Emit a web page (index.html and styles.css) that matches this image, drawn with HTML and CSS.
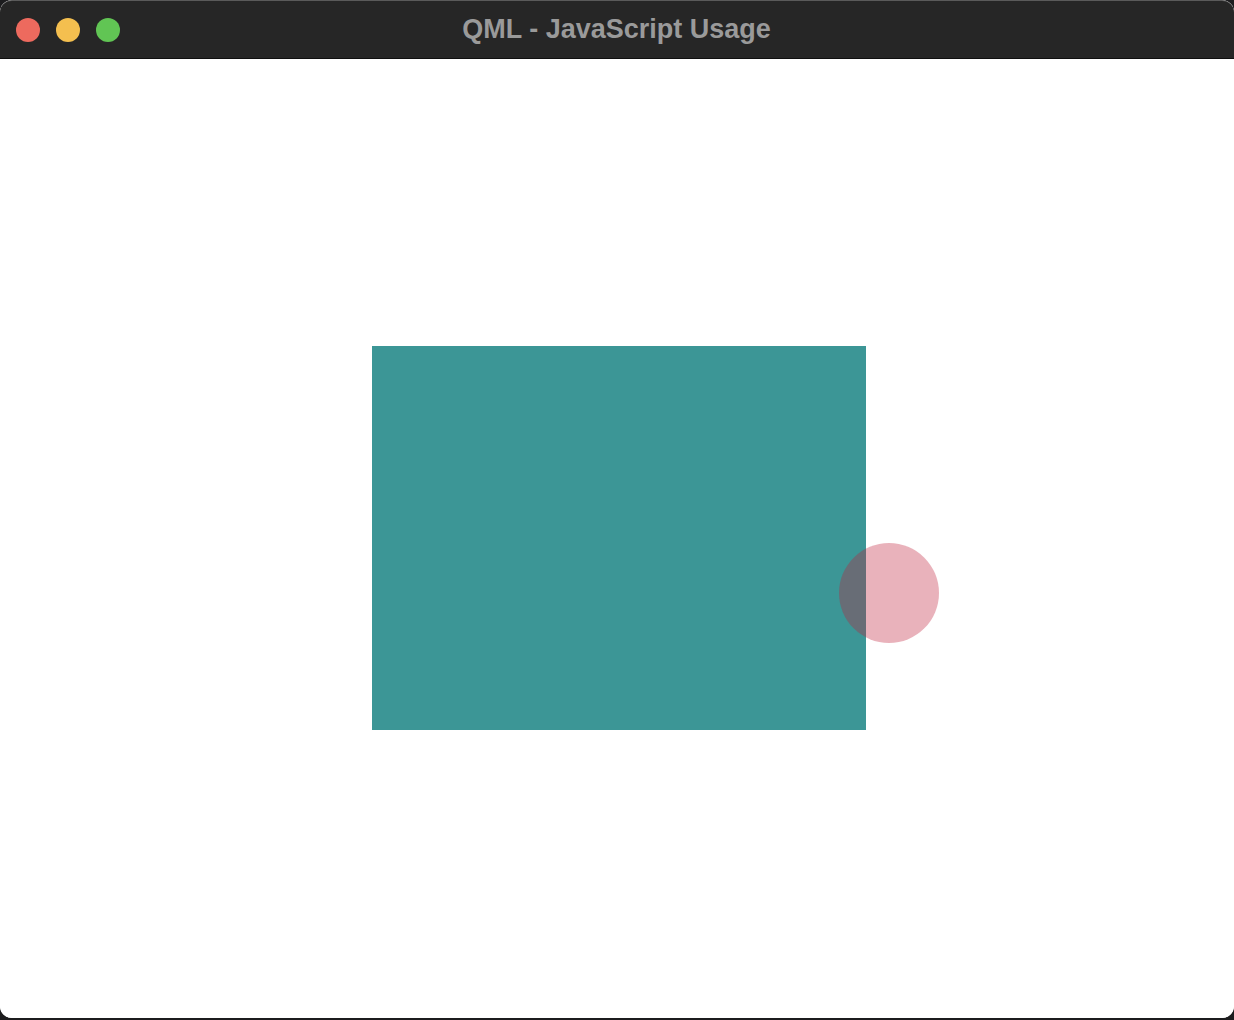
FILE: index.html
```html
<!DOCTYPE html>
<html>
<head>
<meta charset="utf-8">
<link rel="stylesheet" href="styles.css">
<title>QML - JavaScript Usage</title>
</head>
<body>
<div class="window">
  <div class="titlebar">
    <div class="lights">
      <span class="light red"></span>
      <span class="light yellow"></span>
      <span class="light green"></span>
    </div>
    <div class="title">QML - JavaScript Usage</div>
  </div>
  <div class="canvas">
    <div class="rect"></div>
    <div class="circle"></div>
  </div>
</div>
</body>
</html>
```

FILE: styles.css
```css
html, body {
  margin: 0;
  padding: 0;
  width: 1234px;
  height: 1020px;
  overflow: hidden;
  background: #1c1c1e;
}
.window {
  width: 1234px;
  height: 1018px;
  border-radius: 12px;
  overflow: hidden;
  background: #ffffff;
  display: flex;
  flex-direction: column;
}
.titlebar {
  background: #262626;
  border-top: 1px solid #5a5a5a;
  border-bottom: 1px solid #0f0f0f;
  box-sizing: border-box;
  height: 59px;
  position: relative;
  display: flex;
  align-items: center;
  justify-content: center;
  border-radius: 12px 12px 0 0;
}
.lights {
  position: absolute;
  left: 16px;
  top: 17px;
  display: flex;
  gap: 16px;
}
.light {
  width: 24px;
  height: 24px;
  border-radius: 50%;
  display: block;
}
.red { background: #ed6a5e; }
.yellow { background: #f4bf4f; }
.green { background: #61c554; }
.title {
  font-family: "Liberation Sans", Arial, sans-serif;
  font-weight: bold;
  font-size: 27px;
  color: #9a9a9a;
  margin-left: -1px;
}
.canvas {
  flex: 1;
  position: relative;
  background: #ffffff;
}
.rect {
  position: absolute;
  left: 372px;
  top: 287px;
  width: 494px;
  height: 384px;
  background: #3c9696;
}
.circle {
  position: absolute;
  left: 839px;
  top: 484px;
  width: 100px;
  height: 100px;
  border-radius: 50%;
  background: rgba(190, 30, 55, 0.34);
}
```
